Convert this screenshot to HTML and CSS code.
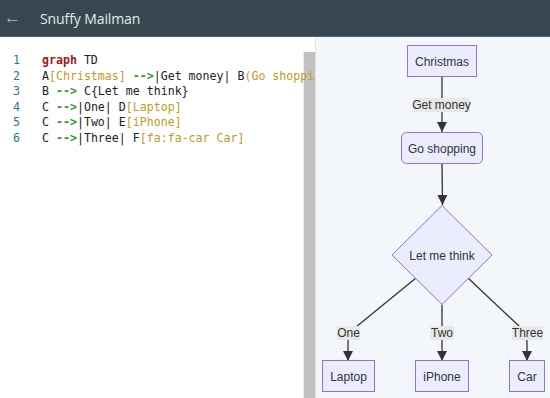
FILE: index.html
```html
<!DOCTYPE html>
<html lang="en">
<head>
  <meta charset="UTF-8" />
  <meta name="viewport" content="width=device-width, initial-scale=1.0" />
  <title>Snuffy Mailman</title>
  <link rel="stylesheet" href="styles.css">
</head>
<body>
  <header class="topbar">
    <span class="back">&#8592;</span>
    <h1>Snuffy Mailman</h1>
  </header>

  <div class="workspace">
    <div class="editor">
      <div class="scrollbar"></div>
      <div class="code">
        <div class="line"><span class="num">1</span><span class="kw">graph</span> TD</div>
        <div class="line"><span class="num">2</span>A<span class="str">[Christmas]</span> <span class="arrow">--&gt;</span>|Get money| B<span class="str">(Go shopping)</span></div>
        <div class="line"><span class="num">3</span>B <span class="arrow">--&gt;</span> C{Let me think}</div>
        <div class="line"><span class="num">4</span>C <span class="arrow">--&gt;</span>|One| D<span class="str">[Laptop]</span></div>
        <div class="line"><span class="num">5</span>C <span class="arrow">--&gt;</span>|Two| E<span class="str">[iPhone]</span></div>
        <div class="line"><span class="num">6</span>C <span class="arrow">--&gt;</span>|Three| F<span class="str">[fa:fa-car Car]</span></div>
      </div>
    </div>

    <div class="preview">
      <svg class="chart" viewBox="315 37 235 361" width="235" height="361">
        <defs>
          <marker id="tip" viewBox="0 0 10 10" refX="10" refY="5" markerWidth="8" markerHeight="8" orient="auto">
            <path d="M0,0 L10,5 L0,10 z" fill="#333"></path>
          </marker>
        </defs>

        <!-- edges -->
        <g class="edge">
          <path d="M442,77 L442,132" marker-end="url(#tip)"></path>
          <path d="M442,164 L442.5,205" marker-end="url(#tip)"></path>
          <path d="M416,278 L356,327 Q348,333 348,342 L348,361" marker-end="url(#tip)"></path>
          <path d="M442,305 L442,361" marker-end="url(#tip)"></path>
          <path d="M468,278 L519,326 Q527,333 527,342 L527,361" marker-end="url(#tip)"></path>
        </g>

        <!-- edge labels -->
        <g class="label">
          <rect x="413" y="98" width="57" height="14"></rect>
          <text x="441.5" y="105">Get money</text>
          <rect x="337" y="326" width="23" height="14"></rect>
          <text x="348.5" y="333">One</text>
          <rect x="430" y="326" width="24" height="14"></rect>
          <text x="442" y="333">Two</text>
          <rect x="512" y="326" width="31" height="14"></rect>
          <text x="527.5" y="333">Three</text>
        </g>

        <!-- nodes -->
        <g class="node">
          <rect x="407.5" y="45.5" width="69" height="31"></rect>
          <text x="442" y="61.5">Christmas</text>
          <rect x="401.5" y="132.5" width="81" height="31" rx="5"></rect>
          <text x="442" y="148.5">Go shopping</text>
          <polygon points="442,205.5 492,255 442,304.5 392,255"></polygon>
          <text x="442" y="255.5">Let me think</text>
          <rect x="322.5" y="360.5" width="52" height="31"></rect>
          <text x="348.5" y="376.5">Laptop</text>
          <rect x="415.5" y="360.5" width="53" height="31"></rect>
          <text x="442" y="376.5">iPhone</text>
          <rect x="509.5" y="360.5" width="35" height="31"></rect>
          <text x="527" y="376.5">Car</text>
        </g>
      </svg>
    </div>
  </div>
</body>
</html>
```

FILE: styles.css
```css
body {
  margin: 0;
  padding: 0;
  width: 550px;
  height: 398px;
  overflow: hidden;
  background: white;
  font-family: "Liberation Sans", Arial, sans-serif;
}
.topbar {
  background: #37474f;
  color: #e3e8eb;
  height: 37px;
  display: flex;
  align-items: center;
  border-bottom: 1px solid #56656d;
  box-sizing: border-box;
}
.topbar .back {
  width: 40px;
  padding-left: 4px;
  box-sizing: border-box;
  font-size: 17px;
  color: #aeb8bd;
}
.topbar h1 {
  margin: 0;
  font-family: "Open Sans", "Noto Sans", sans-serif;
  font-size: 14px;
  font-weight: 400;
  letter-spacing: -0.1px;
}
.workspace {
  display: flex;
  height: 361px;
}
.editor {
  position: relative;
  width: 315px;
  flex: none;
  overflow: hidden;
  background: white;
}
.scrollbar {
  position: absolute;
  top: 15px;
  right: 0;
  bottom: 0;
  width: 11px;
  background: #c1c1c1;
  border-left: 1px solid #ececec;
}
.code {
  position: relative;
  padding-top: 16px;
  font-family: "DejaVu Sans Mono", monospace;
  font-size: 11.6px;
  color: #222;
}
.line {
  height: 15.6px;
  line-height: 15.6px;
  white-space: pre;
}
.num {
  display: inline-block;
  width: 42px;
  padding-left: 13px;
  box-sizing: border-box;
  color: #237893;
}
.kw {
  color: #9b1a1a;
  font-weight: bold;
}
.str {
  color: #c29a1c;
}
.arrow {
  color: #2d9b2d;
  font-weight: bold;
}
.preview {
  flex: 1;
  background: #f3f6fa;
  border-left: 1px solid #dde3ea;
  overflow: hidden;
}
.chart {
  display: block;
  margin-left: -1px;
}
.edge path {
  fill: none;
  stroke: #333;
  stroke-width: 1.3;
}
.label rect {
  fill: #e8e8e8;
}
.node rect, .node polygon {
  fill: #ececff;
  stroke: #9370db;
  stroke-width: 1;
}
.chart text {
  font-family: "Liberation Sans", Arial, sans-serif;
  font-size: 12px;
  fill: #333;
  text-anchor: middle;
  dominant-baseline: central;
}
```
